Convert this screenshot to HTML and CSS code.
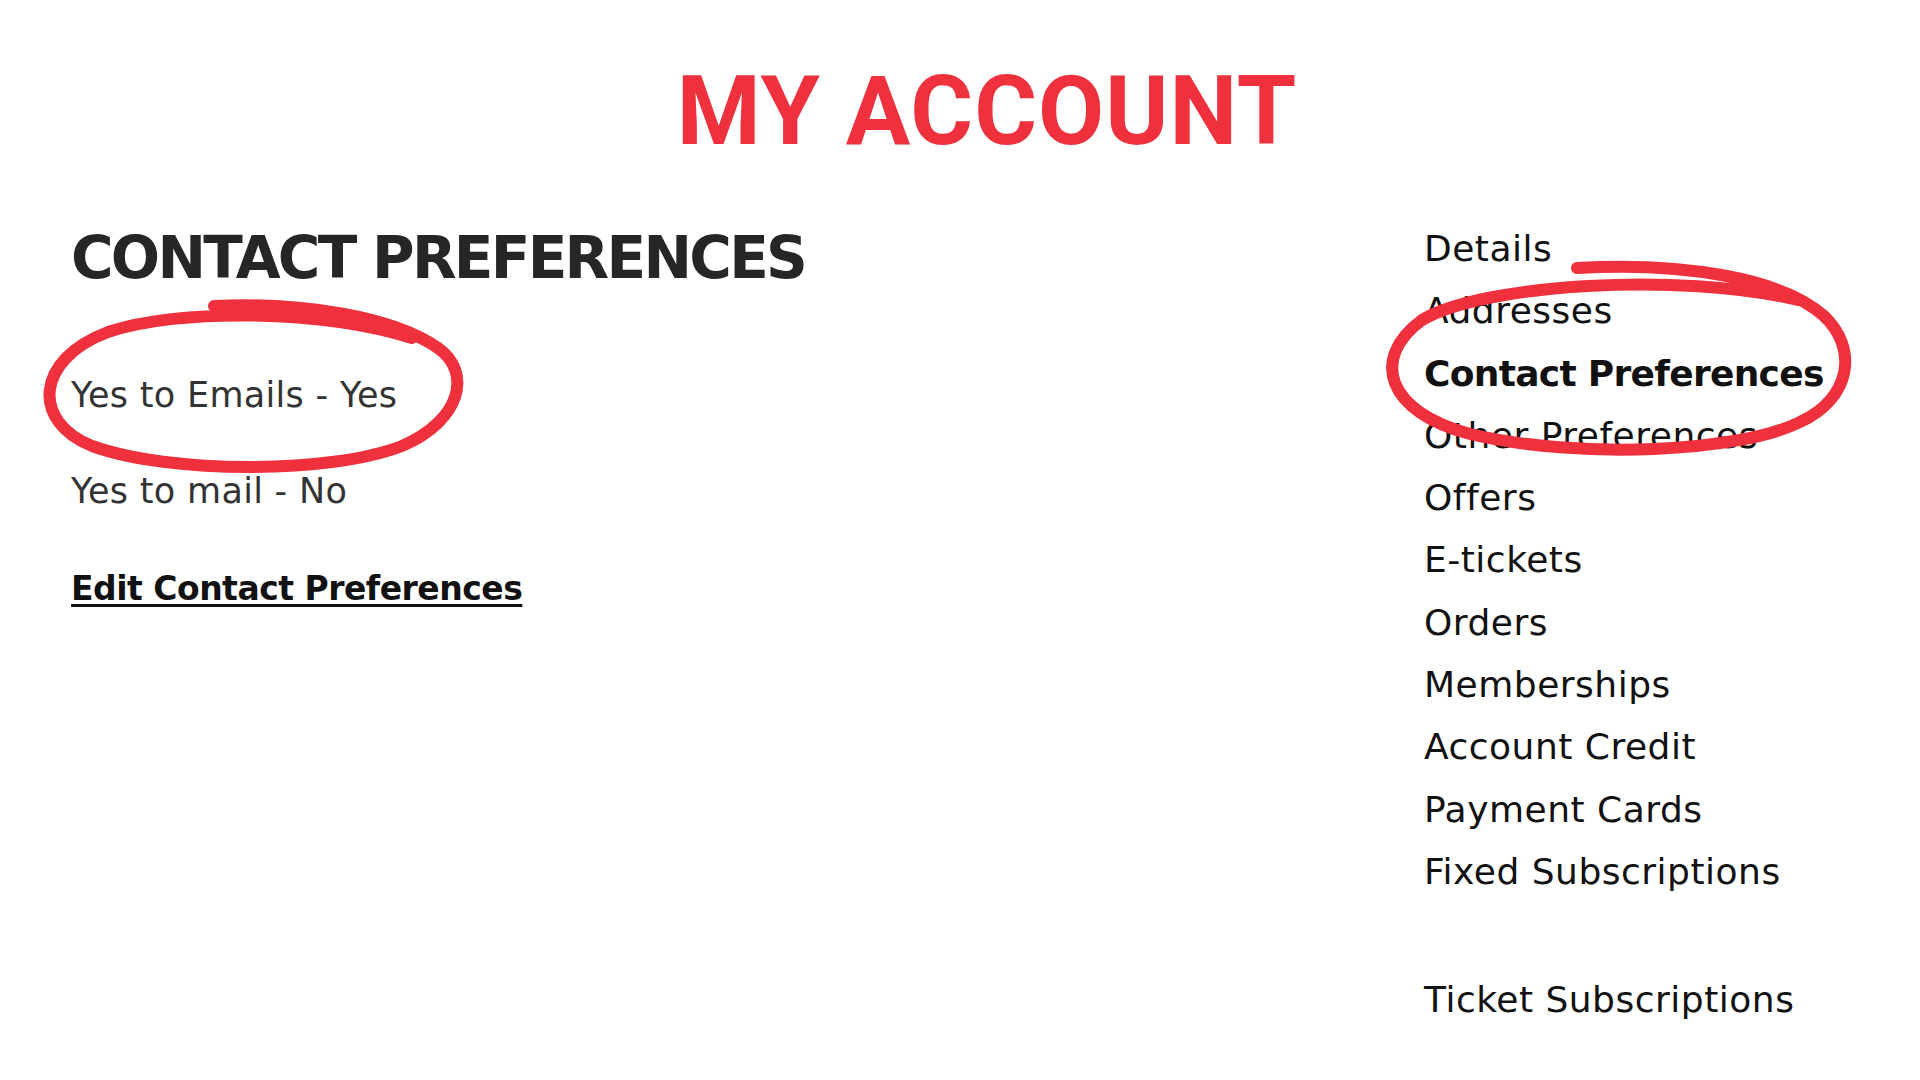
FILE: index.html
```html
<!DOCTYPE html>
<html lang="en">
<head>
    <meta charset="UTF-8">
    <meta name="viewport" content="width=device-width, initial-scale=1.0">
    <title>My Account - Contact Preferences</title>
    <link rel="stylesheet" href="styles.css">
</head>
<body>
    <h1 class="page-title">MY ACCOUNT</h1>

    <main class="account">
        <section class="prefs">
            <h2>CONTACT PREFERENCES</h2>
            <p class="pref-line first">Yes to Emails - Yes</p>
            <p class="pref-line">Yes to mail - No</p>
            <a class="edit-link" href="#">Edit Contact Preferences</a>
        </section>

        <nav class="account-nav">
            <ul>
                <li><a href="#">Details</a></li>
                <li><a href="#">Addresses</a></li>
                <li class="active"><a href="#">Contact Preferences</a></li>
                <li><a href="#">Other Preferences</a></li>
                <li><a href="#">Offers</a></li>
                <li><a href="#">E-tickets</a></li>
                <li><a href="#">Orders</a></li>
                <li><a href="#">Memberships</a></li>
                <li><a href="#">Account Credit</a></li>
                <li><a href="#">Payment Cards</a></li>
                <li><a href="#">Fixed Subscriptions</a></li>
                <li class="spaced"><a href="#">Ticket Subscriptions</a></li>
            </ul>
        </nav>
    </main>

    <!-- hand drawn marker circles over the page -->
    <svg class="marks" width="1920" height="1080" viewBox="0 0 1920 1080">
        <path d="M 214 306 C 300 302, 392 316, 438 348 C 472 372, 462 420, 402 446 C 330 474, 170 474, 92 446 C 32 422, 34 360, 108 332 C 180 308, 322 310, 412 338"/>
        <path d="M 1577 268 C 1682 262, 1782 278, 1824 316 C 1858 348, 1852 398, 1800 422 C 1740 452, 1580 460, 1470 434 C 1386 412, 1370 358, 1422 320 C 1482 284, 1680 272, 1798 300"/>
    </svg>
</body>
</html>
```

FILE: styles.css
```css
body {
    margin: 0;
    font-family: 'DejaVu Sans', Verdana, sans-serif;
    background: #fff;
    color: #2b2b2b;
    position: relative;
    min-height: 1080px;
    overflow: hidden;
}
.page-title {
    margin: 63px 0 0;
    padding-left: 54px;
    font-family: Roboto, 'Liberation Sans', sans-serif;
    font-weight: 700;
    font-size: 96px;
    line-height: 96px;
    letter-spacing: 1px;
    text-align: center;
    color: #ef313e;
}
.account {
    display: grid;
    grid-template-columns: 1fr 496px;
    padding-left: 71px;
    margin-top: 59px;
}
.prefs {
    padding-top: 11px;
}
.prefs h2 {
    margin: 0;
    font-size: 58px;
    line-height: 58px;
    font-weight: 700;
    letter-spacing: -2.7px;
    color: #262626;
}
.pref-line {
    margin: 62px 0 0;
    font-size: 35px;
    line-height: 34px;
    letter-spacing: 0.3px;
    color: #333;
}
.pref-line.first {
    margin-top: 91px;
}
.edit-link {
    display: inline-block;
    margin-top: 64px;
    font-size: 33px;
    line-height: 33px;
    font-weight: 700;
    letter-spacing: -0.5px;
    color: #111;
    text-decoration: underline;
    text-decoration-thickness: 3px;
    text-underline-offset: 4px;
}
.account-nav ul {
    list-style: none;
    margin: 0;
    padding: 0;
}
.account-nav li {
    font-size: 36px;
    line-height: 62.3px;
    letter-spacing: 0.5px;
}
.account-nav a {
    color: #111;
    text-decoration: none;
}
.account-nav li.active {
    font-weight: 700;
    letter-spacing: -0.7px;
}
.account-nav li.spaced {
    margin-top: 66px;
}
.marks {
    position: absolute;
    top: 0;
    left: 0;
    pointer-events: none;
}
.marks path {
    fill: none;
    stroke: #ef313e;
    stroke-width: 12;
    stroke-linecap: round;
    stroke-linejoin: round;
}
```
